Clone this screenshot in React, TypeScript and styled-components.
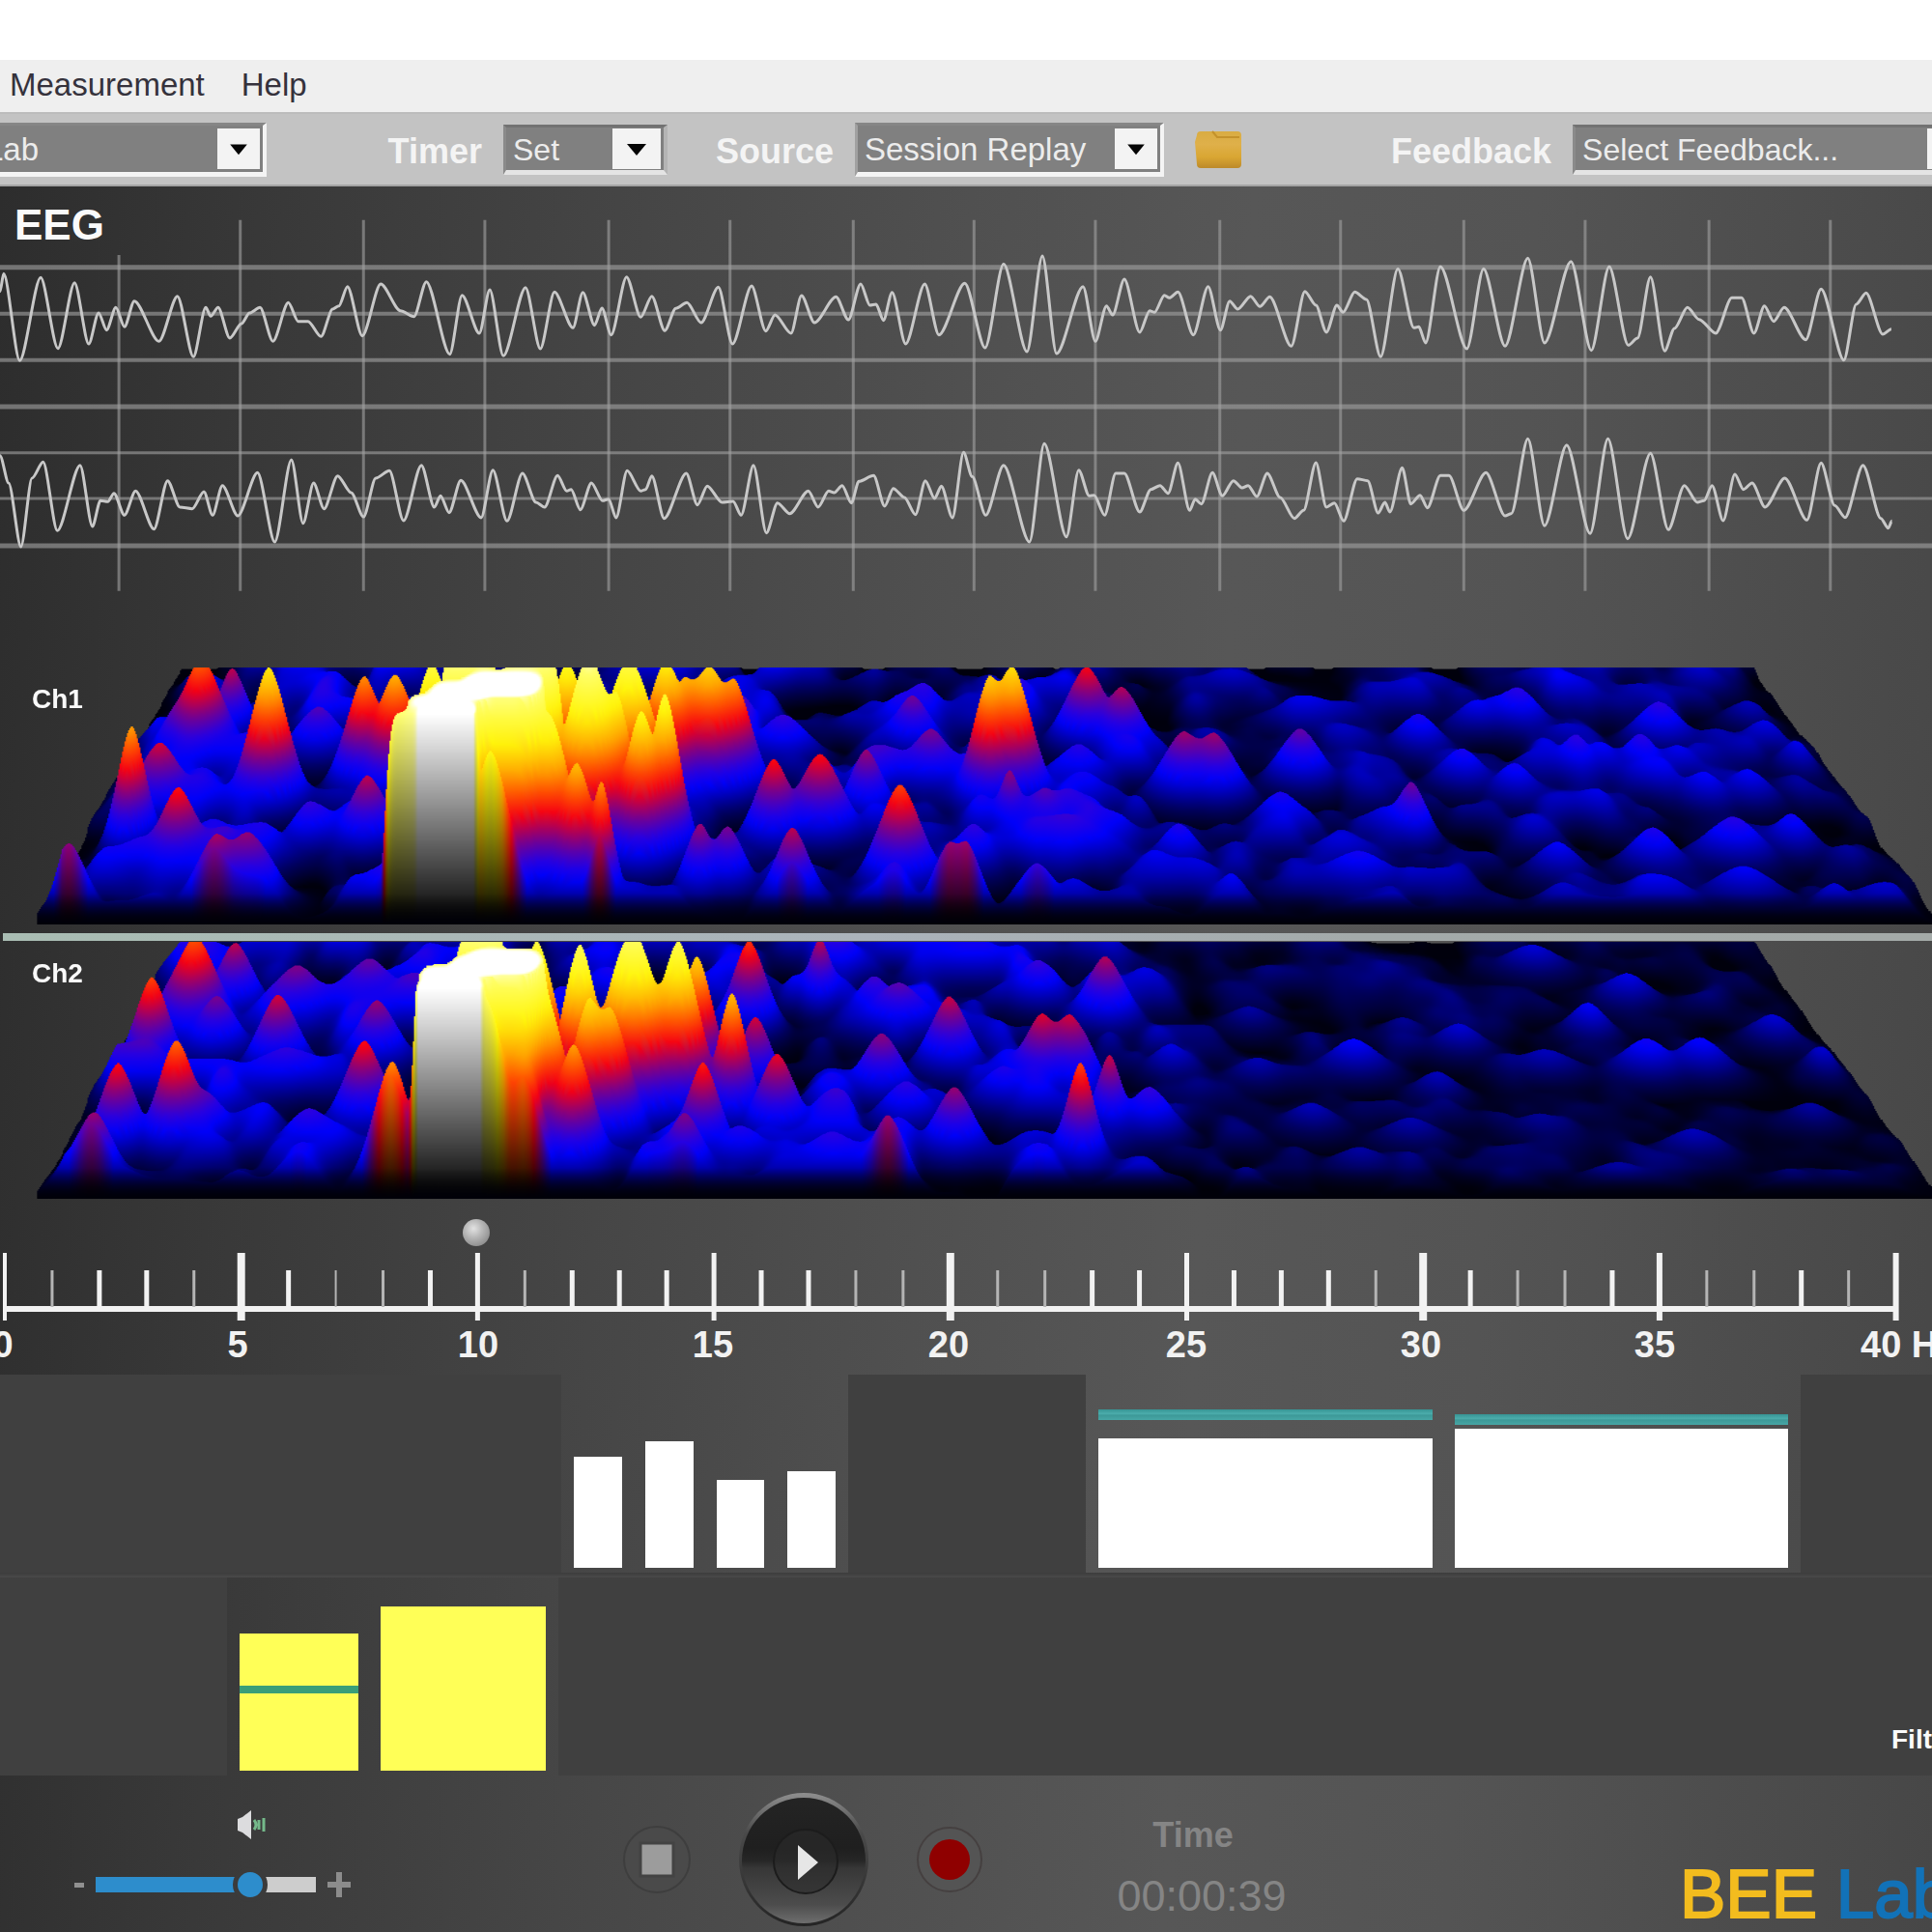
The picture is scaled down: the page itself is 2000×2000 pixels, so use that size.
import React, { useEffect, useId, useRef } from "react";
import styled, { createGlobalStyle } from "styled-components";

const sans = `"Liberation Sans", Arial, sans-serif`;

const GlobalStyle = createGlobalStyle`
  * { box-sizing: border-box; }
  body { margin: 0; background: #fff; font-family: ${sans}; overflow-x: hidden; }
`;

/* ---------- data ---------- */

type Point = [number, number];

// Traces are sampled on a 3136 x 1290 grid, shared by both channels.
const traceOne: Point[] = [
  [0,305],[6,250],[32,520],[66,262],[94,482],[121,278],[144,468],[160,372],[173,425],[188,355],[202,415],[218,335],[258,460],[288,320],[314,508],[334,355],[342,382],[354,355],[373,450],[392,405],[405,372],[422,355],[443,460],[468,340],[484,398],[500,398],[521,445],[540,360],[550,350],[564,290],[588,443],[618,282],[650,365],[672,383],[692,275],[730,500],[750,317],[778,435],[795,300],[817,505],[853,293],[877,483],[900,307],[930,418],[946,308],[965,410],[977,357],[992,440],[1017,260],[1040,385],[1058,320],[1079,427],[1097,358],[1115,340],[1138,402],[1166,292],[1189,468],[1220,288],[1243,428],[1258,378],[1284,435],[1301,318],[1322,402],[1357,322],[1377,393],[1397,282],[1412,348],[1422,345],[1434,395],[1448,308],[1470,468],[1501,282],[1524,440],[1566,280],
  [1599,480],[1629,220],[1667,492],[1692,195],[1715,498],[1758,290],[1778,460],[1796,350],[1806,378],[1825,267],[1850,432],[1866,365],[1874,370],[1890,317],[1898,325],[1912,307],[1937,440],[1961,290],[1981,425],[1996,335],[2009,360],[2030,320],[2045,352],[2061,322],[2096,475],[2118,305],[2136,348],[2153,432],[2170,348],[2180,370],[2199,307],[2218,330],[2241,508],[2269,235],[2295,418],[2303,415],[2314,465],[2338,228],[2381,483],[2408,235],[2443,475],[2480,202],[2507,465],[2550,212],[2583,488],[2612,228],[2643,472],[2658,450],[2679,260],[2702,490],[2718,420],[2739,355],[2758,392],[2785,435],[2811,325],[2827,325],[2847,435],[2864,350],[2879,398],[2896,355],[2931,455],[2956,298],[2993,518],[3013,345],[3029,310],[3056,438],[3070,422],
];

const traceTwo: Point[] = [
  [0,815],[14,900],[34,1098],[52,885],[70,835],[93,1048],[130,845],[150,1035],[163,955],[175,958],[185,932],[202,1000],[220,925],[250,1043],[272,893],[292,975],[312,980],[331,927],[345,1000],[361,908],[386,1002],[418,868],[446,1083],[473,828],[492,1025],[509,900],[526,980],[548,878],[570,930],[590,1005],[610,885],[632,862],[655,1017],[684,845],[705,975],[715,940],[729,992],[748,892],[781,1008],[800,860],[823,1018],[848,870],[870,960],[884,975],[905,877],[920,925],[927,920],[942,983],[960,900],[978,955],[988,950],[1000,1008],[1018,862],[1040,925],[1048,920],[1058,878],[1078,1010],[1114,870],[1132,968],[1148,910],[1172,960],[1190,957],[1203,1000],[1223,845],[1244,1055],[1262,962],[1282,995],[1312,925],[1328,975],[1345,925],[1354,930],[1367,908],[1382,962],[1394,895],[1418,877],[1436,972],[1450,917],[1468,945],[1486,998],[1502,893],[1517,948],[1528,910],[1546,1008],[1564,805],
  [1578,880],[1600,1000],[1629,845],[1671,1083],[1695,778],[1731,1067],[1751,860],[1768,940],[1776,938],[1793,1000],[1811,870],[1825,870],[1850,990],[1868,920],[1883,908],[1896,932],[1912,838],[1931,985],[1940,950],[1950,965],[1968,868],[1984,940],[2002,893],[2016,915],[2026,908],[2040,942],[2057,870],[2078,945],[2101,1010],[2116,985],[2136,837],[2153,975],[2166,962],[2181,1018],[2203,887],[2220,893],[2237,993],[2248,960],[2256,990],[2276,853],[2290,965],[2305,938],[2317,977],[2338,877],[2352,877],[2376,985],[2412,868],[2443,1002],[2453,995],[2480,763],[2507,1033],[2543,782],[2581,1057],[2610,763],[2642,1073],[2679,808],[2708,1045],[2734,908],[2755,960],[2766,955],[2779,908],[2797,1017],[2816,873],[2830,920],[2844,900],[2865,975],[2897,885],[2933,1015],[2956,838],[2978,970],[2995,1007],[3024,845],[3053,1010],[3065,1040],[3071,1018],
];

const gridColumns = [193, 390, 590, 787, 988, 1185, 1385, 1581, 1778, 1980, 2176, 2376, 2573, 2774, 2971];
const gridRows: Point[] = [[230, 5], [374, 4], [518, 4], [663, 5], [806, 3], [948, 3], [1095, 5]];

// Peak: x and y of the summit on a 3136 x 695 plane, level, half width, depth, flat top.
type Peak = [number, number, number, number, number?, boolean?];

const surfaceOne: Peak[] = [
  [325,-20,.56,44,50],[375,5,.4,30],[212,160,.62,28,40],[258,205,.42,50],[435,0,.74,40],[288,330,.46,42],[110,490,.36,36],[350,455,.38,44,40],[400,450,.36,50,40],
  [595,295,.4,42],[515,110,.3,50],[500,370,.26,40],[590,26,.6,38],[640,22,.64,45,40],
  [724,120,1.8,52,46,true],[655,125,.95,34,46,true],[795,227,.78,40,40],[700,90,1.2,50,50,true],[745,60,1.3,60,60,true],[815,45,1.6,74,62,true],
  [890,130,.84,44,45],[935,262,.66,38,36],[975,312,.6,24,40],
  [955,0,1,56,50],[1000,90,.76,34],[1078,72,.82,32,40],[1040,120,.78,38],[1110,50,.6,36],[1150,0,.7,50],[1190,40,.6,38],
  [700,-10,.86,46,40],[760,-20,1.05,60,60,true],[860,-20,1.05,60,60,true],[920,-10,.8,46],[1020,-20,.88,60],[1080,-15,.76,46],
  [1255,250,.46,40],[1330,235,.46,50],[1405,225,.37,36],[1460,318,.52,46],[1135,425,.37,32],[1180,432,.34,36],[1285,435,.4,38],[1540,490,.36,36],[1568,505,.36,32],
  [1510,170,.34,48],[1480,80,.33,40],[1270,130,.27,55],[1642,0,.72,42],[1605,32,.68,36],[1763,0,.45,44],[1820,55,.39,44],[1920,178,.37,46],[1970,182,.37,46],
  [2110,168,.32,46],[1638,282,.36,26],[1695,345,.28,40],[1750,210,.25,50],[2290,312,.33,34],[1683,540,.27,44],[1580,430,.26,40],[1913,425,.24,44],[1998,560,.2,36],[2205,500,.22,80],
  [2303,130,.23,44],[2463,60,.25,46],[2558,185,.26,36],[2693,95,.26,50],[2663,185,.25,38],[2373,222,.23,48],[2458,262,.22,44],[2683,435,.24,50],[2813,408,.25,60],[2908,400,.22,40],
  [2923,195,.2,40],[2838,280,.2,48],[2770,290,.2,44],[2528,475,.2,50],[2078,340,.23,50],[2978,588,.17,40],[2120,90,.17,80],[2838,95,.15,46],[2000,10,.16,70],[2760,0,.16,50],[2320,20,.14,60],[2560,560,.13,50],[2830,540,.2,70],[2700,570,.18,70],
];

const surfaceTwo: Peak[] = [
  [315,-10,.54,46,50],[380,5,.4,38],[245,98,.52,36],[285,268,.56,40],[190,330,.46,38],[150,470,.36,40],[450,145,.42,42],[610,160,.37,44],[590,270,.46,42],[635,325,.6,38,40],
  [480,70,.34,54],[600,60,.3,54],[500,455,.26,54],[350,150,.34,44],[335,420,.28,46],
  [728,122,1.8,58,46,true],[720,85,1.3,50,50,true],[770,58,1.25,50,60,true],[815,55,1.6,70,62,true],[790,170,.88,40,40],[850,323,.6,38,40],
  [880,130,.82,46,45],[930,280,.62,40,40],[955,160,.72,38],[990,188,.66,40],[940,8,.9,40],[1010,80,.74,46],
  [780,-10,.98,60,50,true],[870,0,.86,44],[1030,-10,.92,54],[1100,0,.88,44],[1130,40,.7,36],[1215,0,.5,36],[1187,140,.66,32],[1225,205,.42,36],
  [1140,328,.48,36],[1260,305,.44,42],[1330,-5,.4,26],[1430,250,.36,46],[1540,150,.41,42],[1460,120,.3,64],[1440,510,.36,36],[1350,520,.25,64],[1548,395,.37,44],[1110,470,.34,40],[1200,500,.24,64],
  [1793,42,.39,42],[1683,55,.27,48],[1690,200,.42,42],[1735,203,.41,42],[1753,328,.52,30],[1800,308,.41,28],[1865,395,.27,48],[1628,340,.24,54],[1470,380,.26,54],
  [2028,180,.13,50],[2198,268,.2,56],[2278,210,.12,44],[2368,225,.17,50],[2508,295,.15,66],[2578,168,.2,40],[2643,90,.18,48],[2488,12,.17,60],[2673,265,.22,56],[2760,262,.21,52],
  [2878,200,.17,46],[2965,268,.2,34],[2333,355,.15,44],[2128,440,.15,54],[2208,560,.13,60],[2290,480,.14,60],[2748,510,.15,60],[2628,600,.13,70],[2040,320,.14,50],[2500,470,.12,60],[2940,440,.13,50],[1900,280,.18,44],
];

const tickWeights = [4, 3, 5, 5, 3, 8, 5, 2, 3, 5, 5, 3, 5, 5, 5, 5, 5, 5, 3, 3, 8, 3, 3, 5, 5, 5, 5, 5, 5, 3, 8, 5, 3, 3, 5, 6, 3, 3, 5, 3, 6];

/* ---------- window chrome ---------- */

const Page = styled.div`
  display: flex;
  flex-direction: column;
  min-height: 100vh;
  padding-top: 62px;
  overflow: hidden;
`;

const MenuBar = styled.nav`
  display: flex;
  align-items: center;
  gap: 38px;
  height: 54px;
  padding: 0 10px 2px;
  background: #efefef;
`;

const MenuItem = styled.button`
  border: 0;
  padding: 0;
  background: none;
  color: #35323c;
  font: 33px/40px ${sans};
`;

const Toolbar = styled.div`
  display: flex;
  align-items: center;
  height: 77px;
  background: #c3c3c3;
  border-top: 2px solid #bcbcbc;
  border-bottom: 2px solid #a4a4a4;
`;

const Field = styled.div<{ $width?: number }>`
  display: flex;
  flex: none;
  align-items: center;
  justify-content: flex-end;
  gap: 22px;
  width: ${(p) => (p.$width ? `${p.$width}px` : "auto")};
`;

const FieldLabel = styled.label`
  padding-top: 4px;
  color: #f4f4f4;
  font: bold 36px/40px ${sans};
`;

const SelectBox = styled.div<{ $width: number; $raised?: boolean }>`
  display: grid;
  flex: none;
  width: ${(p) => p.$width}px;
  height: ${(p) => (p.$raised ? 56 : 52)}px;
  border: solid;
  border-width: 3px 4px 5px 3px;
  border-color: ${(p) => (p.$raised ? "#868686 #f4f4f4 #f4f4f4 #a0a0a0" : "#727272 #b4b4b4 #e4e4e4 #8a8a8a")};
  background: #808080;
`;

const Select = styled.select<{ $large?: boolean }>`
  grid-area: 1 / 1;
  width: 100%;
  appearance: none;
  border: 0;
  padding: 2px 7px 0;
  background: none;
  color: #ececec;
  font: ${(p) => (p.$large ? 33 : 32)}px/42px ${sans};
`;

const Arrow = styled.svg<{ $wide?: boolean }>`
  grid-area: 1 / 1;
  place-self: center end;
  width: ${(p) => (p.$wide ? 50 : 44)}px;
  height: 42px;
  margin-right: 3px;
  background: #f3f3f3;
  pointer-events: none;
`;

const FolderButton = styled.button`
  flex: none;
  margin: 0 155px 0 32px;
  padding: 0;
  border: 0;
  background: none;
  line-height: 0;
`;

const Workspace = styled.main`
  flex: 1;
  background: linear-gradient(93deg, #2d2d2d 0%, #393939 14%, #464646 32%, #505050 48%, #575757 62%, #545454 76%, #474747 100%);
`;

/* ---------- EEG ---------- */

const EegPanel = styled.section`
  display: grid;
  height: 498px;
  padding-top: 7px;
`;

const Traces = styled.svg`
  grid-area: 1 / 1;
  display: block;
  width: 100%;
  height: 430px;
`;

const PanelTitle = styled.h1`
  grid-area: 1 / 1;
  margin: 9px 0 0 15px;
  color: #fafafa;
  font: bold 44px/48px ${sans};
`;

/* ---------- spectra ---------- */

const Channel = styled.section`
  display: grid;
  height: 266px;
`;

const ChannelName = styled.h2`
  grid-area: 1 / 1;
  margin: 17px 0 0 33px;
  color: #fafafa;
  font: bold 28px/32px ${sans};
`;

const SurfaceCanvas = styled.canvas`
  grid-area: 1 / 1;
  display: block;
  width: 100%;
  height: 266px;
`;

const Divider = styled.hr`
  height: 8px;
  margin: 9px 0 1px 3px;
  border: 0;
  background: linear-gradient(90deg, #a9bdb3, #abb3bb 45%, #a3aaaa 70%, #a4aaa8);
`;

/* ---------- frequency scale ---------- */

const Scale = styled.section`
  height: 182px;
  padding-top: 18px;
`;

const Ruler = styled.svg`
  display: block;
  width: 100%;
  height: 110px;
`;

const ScaleLabels = styled.div`
  display: grid;
  grid-template-columns: 3px 243fr 249fr 243fr 244fr 246fr 243fr 242fr 213fr 74px;
  padding-top: 1px;
  color: #f2f2f2;
  font: bold 38px/44px ${sans};
`;

const ScaleLabel = styled.span<{ $start?: boolean }>`
  display: flex;
  justify-content: ${(p) => (p.$start ? "flex-start" : "center")};
  width: ${(p) => (p.$start ? "auto" : "0")};
  white-space: nowrap;
`;

/* ---------- band bars ---------- */

const Band = styled.section<{ $columns: string }>`
  display: grid;
  grid-template-columns: ${(p) => p.$columns};
  height: 205px;
`;

const Blank = styled.div`
  display: flex;
  align-items: flex-end;
  justify-content: flex-end;
  overflow: hidden;
  background: #404040;
`;

const Bars = styled.div<{ $gap: number }>`
  display: flex;
  align-items: flex-end;
  gap: ${(p) => p.$gap}px;
  padding: 0 13px 5px;
`;

const Bar = styled.div<{ $height: number; $grow?: number; $color?: string }>`
  position: relative;
  flex: ${(p) => p.$grow ?? 1} 1 0;
  height: ${(p) => p.$height}px;
  background: ${(p) => p.$color ?? "#fff"};
`;

const Threshold = styled.div<{ $bottom: number; $height: number; $color: string }>`
  position: absolute;
  left: 0;
  right: 0;
  bottom: ${(p) => p.$bottom}px;
  height: ${(p) => p.$height}px;
  background: ${(p) => p.$color};
`;

const BandLine = styled.div`
  height: 5px;
  background: linear-gradient(#3c3c3c, #4a4a4a);
`;

const FilterLabel = styled.span`
  width: 42px;
  margin-bottom: 21px;
  color: #fafafa;
  font: bold 28px/32px ${sans};
  white-space: nowrap;
`;

/* ---------- footer ---------- */

const Footer = styled.footer`
  display: grid;
  grid-template-columns: minmax(0, 645fr) minmax(0, 511fr) minmax(0, 587fr) minmax(0, 257fr);
  height: 162px;
`;

const Volume = styled.div`
  display: flex;
  flex-direction: column;
  align-items: flex-start;
  gap: 29px;
  padding: 36px 0 0 77px;
`;

const VolumeRow = styled.div`
  display: flex;
  align-items: center;
  gap: 12px;
`;

const SpeakerIcon = styled.svg`
  display: block;
  margin-left: 168px;
`;

const StepButton = styled.button`
  display: block;
  padding: 0;
  border: 0;
  background: none;
  line-height: 0;
`;

const VolumeSlider = styled.input`
  width: 228px;
  height: 36px;
  margin: 0;
  appearance: none;
  background: linear-gradient(90deg, #2d8dcc 70%, #cdcdcd 70%) center / 100% 16px no-repeat;
  &::-webkit-slider-thumb {
    appearance: none;
    width: 36px;
    height: 36px;
    border: 5px solid #3b3b3b;
    border-radius: 50%;
    background: #2d8dcc;
  }
`;

const Transport = styled.div`
  display: flex;
  align-items: center;
  gap: 49px;
  height: 138px;
  margin-top: 18px;
`;

const TransportButton = styled.button`
  padding: 0;
  border: 0;
  border-radius: 50%;
  background: none;
  line-height: 0;
`;

const Clock = styled.div`
  display: flex;
  flex-direction: column;
  gap: 16px;
  width: 176px;
  padding-top: 42px;
  color: #858585;
  text-align: center;
`;

const ClockLabel = styled.span`
  margin-right: 18px;
  font: bold 36px/40px ${sans};
`;

const ClockValue = styled.time`
  font: 45px/54px ${sans};
`;

const Logo = styled.div`
  padding-top: 85px;
  margin-left: -4px;
  color: #1272b8;
  font: 71px/76px ${sans};
  -webkit-text-stroke: 2px currentColor;
  white-space: nowrap;
`;

const LogoAccent = styled.span`
  color: #f3bc1e;
`;

/* ---------- drawing helpers ---------- */

function smoothPath(points: Point[]) {
  return points
    .map(([x, y], i) => {
      if (i === 0) return `M${x},${y}`;
      const [px, py] = points[i - 1];
      const dx = (x - px) * 0.28;
      return `C${px + dx},${py} ${x - dx},${y} ${x},${y}`;
    })
    .join("");
}

const heatStops: [number, number, number, number][] = [
  [0, 0, 0, 12],
  [0.08, 0, 0, 95],
  [0.2, 0, 0, 250],
  [0.26, 40, 0, 225],
  [0.35, 125, 0, 135],
  [0.45, 245, 0, 20],
  [0.54, 255, 80, 0],
  [0.63, 255, 165, 0],
  [0.76, 255, 245, 10],
  [0.95, 255, 255, 110],
  [1.15, 255, 255, 255],
];

function heatColor(level: number): [number, number, number] {
  for (let i = 1; i < heatStops.length; i++) {
    const b = heatStops[i];
    if (level <= b[0]) {
      const a = heatStops[i - 1];
      const t = Math.max(0, (level - a[0]) / (b[0] - a[0]));
      return [a[1] + (b[1] - a[1]) * t, a[2] + (b[2] - a[2]) * t, a[3] + (b[3] - a[3]) * t];
    }
  }
  return [255, 255, 255];
}

function hash(x: number, y: number, seed: number) {
  const v = Math.sin(x * 127.1 + y * 311.7 + seed * 74.7) * 43758.5453;
  return v - Math.floor(v);
}

function valueNoise(x: number, y: number, seed: number) {
  const ix = Math.floor(x);
  const iy = Math.floor(y);
  const fx = x - ix;
  const fy = y - iy;
  const sx = fx * fx * (3 - 2 * fx);
  const sy = fy * fy * (3 - 2 * fy);
  const top = hash(ix, iy, seed) * (1 - sx) + hash(ix + 1, iy, seed) * sx;
  const low = hash(ix, iy + 1, seed) * (1 - sx) + hash(ix + 1, iy + 1, seed) * sx;
  return top * (1 - sy) + low * sy;
}

const PLANE_W = 3136;
const PLANE_H = 695;
const RELIEF = 600;
const CEILING = 0.95;
const leftEdge = (b: number) => 295 - (235 * b) / PLANE_H;
const rightEdge = (b: number) => 2840 + (305 * b) / PLANE_H;
const reliefAt = (b: number) => RELIEF * (0.825 + (0.175 * b) / PLANE_H);

// Paints the relief row by row, from the oldest spectrum at the back to the newest in front.
function paintSurface(canvas: HTMLCanvasElement, peaks: Peak[], seed: number, quiet: number) {
  const ctx = canvas.getContext("2d");
  if (!ctx) return;
  const w = canvas.width;
  const h = canvas.height;
  const image = ctx.createImageData(w, h);
  const rows = 140;
  const previousY = new Float32Array(w).fill(NaN);
  const previousLevel = new Float32Array(w);

  const placed = peaks.map(([x, y, level, width, depth = 36, flat = false]) => {
    const height = Math.min(level, CEILING);
    let base = y + height * RELIEF * 0.9;
    for (let i = 0; i < 4; i++) base = y + height * reliefAt(base);
    base = Math.min(base, PLANE_H);
    return { u: (x - leftEdge(base)) / (rightEdge(base) - leftEdge(base)), base, level, width: flat ? width : width * 1.2, depth, flat };
  });

  const paintRun = (col: number, y0: number, y1: number, c0: number[], c1: number[]) => {
    const from = Math.max(0, Math.floor(Math.min(y0, y1)));
    const to = Math.min(h - 1, Math.ceil(Math.max(y0, y1)));
    for (let y = from; y <= to; y++) {
      const t = y1 === y0 ? 1 : Math.min(1, Math.max(0, (y - y0) / (y1 - y0)));
      const k = (y * w + col) * 4;
      for (let n = 0; n < 3; n++) image.data[k + n] = c0[n] + (c1[n] - c0[n]) * t;
      image.data[k + 3] = 255;
    }
  };

  for (let r = 0; r <= rows; r++) {
    const base = 4 + ((PLANE_H - 4) * r) / rows;
    const left = leftEdge(base);
    const right = rightEdge(base);
    const relief = reliefAt(base);
    const near = placed
      .map((p) => ({ ...p, x: left + p.u * (right - left), gain: p.level * Math.exp(-(((base - p.base) / p.depth) ** 2)) }))
      .filter((p) => p.gain > 0.02);

    for (let col = 0; col < w; col++) {
      const x = (col / w) * PLANE_W;
      if (x < left || x > right) continue;
      const u = (x - left) / (right - left);
      const n =
        valueNoise(u * 36, base / 62, seed) * 0.65 + valueNoise(u * 66, base / 40, seed + 9) * 0.35;
      const fade = Math.min(1, Math.max(0, (u - 0.55) / 0.1));
      const floor = Math.max(0, (n - 0.22) * (0.4 * (1 - fade) + quiet * fade));
      let total = floor ** 4;
      for (const p of near) {
        const d = Math.abs(x - p.x) / p.width;
        if (d > 3) continue;
        const g = p.gain * Math.exp(-(p.flat ? d ** 5 : d ** 1.7));
        total += g ** 4;
      }
      const edge = Math.min(1, (x - left) / 40, (right - x) / 60);
      const level = Math.pow(total, 0.25) * (0.3 + 0.7 * edge);
      const y = ((base - Math.min(level, CEILING) * relief) / PLANE_H) * h;
      if (!Number.isNaN(previousY[col])) {
        paintRun(col, previousY[col], y, heatColor(previousLevel[col]), heatColor(level));
      }
      previousY[col] = y;
      previousLevel[col] = level;
      if (r === rows) paintRun(col, y, h, heatColor(level), [0, 0, 0]);
    }
  }
  ctx.putImageData(image, 0, 0);

  const shade = ctx.createLinearGradient(0, h * 0.88, 0, h);
  shade.addColorStop(0, "rgba(0,0,0,0)");
  shade.addColorStop(1, "rgba(0,0,10,0.9)");
  ctx.globalCompositeOperation = "source-atop";
  ctx.fillStyle = shade;
  ctx.fillRect(0, 0, w, h);
}

/* ---------- components ---------- */

function Dropdown(props: { id: string; label?: string; value: string; width: number; raised?: boolean; wide?: boolean }) {
  return (
    <SelectBox $width={props.width} $raised={props.raised}>
      <Select id={props.id} aria-label={props.label} $large={props.raised} defaultValue={props.value}>
        <option>{props.value}</option>
      </Select>
      <Arrow $wide={props.wide} viewBox="-25 -21 50 42" aria-hidden="true">
        <path d="M-10-5H10L0 7Z" fill="#050505" />
      </Arrow>
    </SelectBox>
  );
}

function Surface(props: { name: string; peaks: Peak[]; seed: number; quiet: number }) {
  const ref = useRef<HTMLCanvasElement>(null);
  useEffect(() => {
    if (ref.current) paintSurface(ref.current, props.peaks, props.seed, props.quiet);
  }, [props.peaks, props.seed, props.quiet]);
  return (
    <Channel>
      <SurfaceCanvas ref={ref} width={1568} height={348} />
      <ChannelName>{props.name}</ChannelName>
    </Channel>
  );
}

function EegTraces() {
  return (
    <Traces viewBox="0 0 3136 1290" preserveAspectRatio="none" fill="none" aria-hidden="true">
      <g stroke="#a0a0a0" strokeOpacity="0.62">
        {gridRows.map(([y, weight]) => (
          <path key={y} d={`M0 ${y}H3136`} strokeWidth={weight} vectorEffect="non-scaling-stroke" />
        ))}
        {gridColumns.map((x, i) => (
          <path key={x} d={`M${x} ${i ? 83 : 192}V1235`} strokeWidth="3" vectorEffect="non-scaling-stroke" />
        ))}
      </g>
      <g stroke="#c8c8c8" strokeWidth="3" strokeLinejoin="round">
        <path d={smoothPath(traceOne)} vectorEffect="non-scaling-stroke" />
        <path d={smoothPath(traceTwo)} vectorEffect="non-scaling-stroke" />
      </g>
    </Traces>
  );
}

function FrequencyRuler() {
  const ball = useId();
  return (
    <Ruler viewBox="0 0 2000 110" preserveAspectRatio="none" aria-hidden="true">
      <defs>
        <radialGradient id={ball} cx="0.4" cy="0.35" r="0.7">
          <stop offset="0" stopColor="#e2e2e2" />
          <stop offset="0.5" stopColor="#b5b5b5" />
          <stop offset="1" stopColor="#8c8c8c" />
        </radialGradient>
      </defs>
      <circle cx="493" cy="17" r="14" fill={`url(#${ball})`} />
      <rect x="4" y="93" width="1960" height="6" fill="#f2f2f2" />
      {tickWeights.map((weight, i) => {
        const x = 5 + i * 48.94;
        const major = i % 5 === 0;
        return (
          <rect
            key={i}
            x={x - weight / 2}
            y={major ? 38 : 56}
            width={weight}
            height={major ? 70 : 38}
            fill={weight < 4 ? "#b4b4b4" : "#f2f2f2"}
          />
        );
      })}
    </Ruler>
  );
}

function PlayIcon() {
  return (
    <svg width="136" height="140" viewBox="-68 -70 136 140" aria-hidden="true">
      <defs>
        <linearGradient id="rim" x1="0" y1="0" x2="0" y2="1">
          <stop offset="0" stopColor="#8f8f8f" />
          <stop offset="0.3" stopColor="#4a4a4a" />
          <stop offset="1" stopColor="#242424" />
        </linearGradient>
        <linearGradient id="dome" x1="0" y1="0" x2="0" y2="1">
          <stop offset="0" stopColor="#242424" />
          <stop offset="0.4" stopColor="#1f1f1f" />
          <stop offset="0.5" stopColor="#262626" />
          <stop offset="0.56" stopColor="#373737" />
          <stop offset="0.85" stopColor="#4c4c4c" />
          <stop offset="1" stopColor="#6e6e6e" />
        </linearGradient>
      </defs>
      <ellipse rx="67" ry="69" fill="url(#rim)" />
      <ellipse cy="1" rx="64" ry="65" fill="url(#dome)" />
      <circle cx="2" cy="2" r="33" fill="#2b2b2b" fillOpacity="0.6" stroke="#1c1c1c" strokeWidth="2" />
      <path d="M-6-15L15 3L-6 21Z" fill="#e6e6e6" />
    </svg>
  );
}

export default function App() {
  return (
    <Page>
      <GlobalStyle />
      <MenuBar>
        <MenuItem type="button">Measurement</MenuItem>
        <MenuItem type="button">Help</MenuItem>
      </MenuBar>

      <Toolbar>
        <Field $width={276}>
          <Dropdown id="session" label="Session" value="Lab" width={301} raised />
        </Field>
        <Field $width={415}>
          <FieldLabel htmlFor="timer">Timer</FieldLabel>
          <Dropdown id="timer" value="Set" width={170} wide />
        </Field>
        <Field $width={514}>
          <FieldLabel htmlFor="source">Source</FieldLabel>
          <Dropdown id="source" value="Session Replay" width={320} raised />
        </Field>
        <FolderButton type="button" aria-label="Open session">
          <svg width="48" height="40" viewBox="0 0 48 40" aria-hidden="true">
            <defs>
              <linearGradient id="folder" x1="0" y1="0" x2="0" y2="1">
                <stop offset="0" stopColor="#d9ac42" />
                <stop offset="0.35" stopColor="#dfb04a" />
                <stop offset="0.7" stopColor="#d9a633" />
                <stop offset="1" stopColor="#bd8a2a" />
              </linearGradient>
            </defs>
            <path d="M2 5Q2 1 6 1H44Q48 1 48 5V35Q48 39 44 39H6Q2 39 2 35L0 12Z" fill="url(#folder)" />
            <path d="M18 1L23 7H46" fill="none" stroke="#c4922b" strokeWidth="2" />
          </svg>
        </FolderButton>
        <Field>
          <FieldLabel htmlFor="feedback">Feedback</FieldLabel>
          <Dropdown id="feedback" value="Select Feedback..." width={424} wide />
        </Field>
      </Toolbar>

      <Workspace>
        <EegPanel>
          <EegTraces />
          <PanelTitle>EEG</PanelTitle>
        </EegPanel>

        <Surface name="Ch1" peaks={surfaceOne} seed={3} quiet={0.3} />
        <Divider />
        <Surface name="Ch2" peaks={surfaceTwo} seed={11} quiet={0.17} />

        <Scale>
          <FrequencyRuler />
          <ScaleLabels>
            <span />
            {[0, 5, 10, 15, 20, 25, 30, 35].map((value) => (
              <ScaleLabel key={value}>{value}</ScaleLabel>
            ))}
            <ScaleLabel $start>40 Hz</ScaleLabel>
          </ScaleLabels>
        </Scale>

        <Band $columns="581fr 297fr 246fr 740fr 136fr">
          <Blank />
          <Bars $gap={24}>
            <Bar $height={115} />
            <Bar $height={131} />
            <Bar $height={91} />
            <Bar $height={100} />
          </Bars>
          <Blank />
          <Bars $gap={23}>
            <Bar $height={134}>
              <Threshold $bottom={153} $height={11} $color="linear-gradient(#379494, #4bacab 40%, #3d9998 55%, #47a6a5)" />
            </Bar>
            <Bar $height={144}>
              <Threshold $bottom={148} $height={11} $color="linear-gradient(#379494, #4bacab 40%, #3d9998 55%, #47a6a5)" />
            </Bar>
          </Bars>
          <Blank />
        </Band>
        <BandLine />
        <Band $columns="235fr 343fr 1422fr">
          <Blank />
          <Bars $gap={23}>
            <Bar $height={142} $grow={123} $color="#ffff57">
              <Threshold $bottom={80} $height={8} $color="#3a9e78" />
            </Bar>
            <Bar $height={170} $grow={172} $color="#ffff57" />
          </Bars>
          <Blank>
            <FilterLabel>Filter</FilterLabel>
          </Blank>
        </Band>

        <Footer>
          <Volume>
            <SpeakerIcon width="32" height="30" viewBox="0 0 32 30" aria-hidden="true">
              <path d="M1 9L6 7L15 0V30L6 23L1 21Z" fill="#dcdcde" />
              <path d="M18 10Q22 15 18 20M23 10V20M28 8V22" fill="none" stroke="#74b98a" strokeWidth="3" />
            </SpeakerIcon>
            <VolumeRow>
              <StepButton type="button" aria-label="Volume down">
                <svg width="10" height="5" viewBox="0 0 10 5" aria-hidden="true">
                  <rect width="10" height="5" fill="#909090" />
                </svg>
              </StepButton>
              <VolumeSlider type="range" min="0" max="100" defaultValue="74" aria-label="Volume" />
              <StepButton type="button" aria-label="Volume up">
                <svg width="24" height="26" viewBox="0 0 24 26" aria-hidden="true">
                  <path d="M9 0H15V10H24V16H15V26H9V16H0V10H9Z" fill="#8c8c8c" />
                </svg>
              </StepButton>
            </VolumeRow>
          </Volume>

          <Transport>
            <TransportButton type="button" aria-label="Stop">
              <svg width="70" height="72" viewBox="-35 -36 70 72" aria-hidden="true">
                <circle r="34" fill="#4a4a4a" stroke="#3e3e3e" strokeWidth="2" />
                <rect x="-17" y="-17" width="34" height="34" fill="#9c9c9c" stroke="#434343" strokeWidth="3" />
              </svg>
            </TransportButton>
            <TransportButton type="button" aria-label="Play">
              <PlayIcon />
            </TransportButton>
            <TransportButton type="button" aria-label="Record">
              <svg width="68" height="72" viewBox="-34 -36 68 72" aria-hidden="true">
                <circle r="33" fill="#545454" stroke="#454040" strokeWidth="2" />
                <circle r="21" fill="#8f0000" />
              </svg>
            </TransportButton>
          </Transport>

          <Clock>
            <ClockLabel>Time</ClockLabel>
            <ClockValue>00:00:39</ClockValue>
          </Clock>

          <Logo>
            <LogoAccent>BEE</LogoAccent> Lab
          </Logo>
        </Footer>
      </Workspace>
    </Page>
  );
}
